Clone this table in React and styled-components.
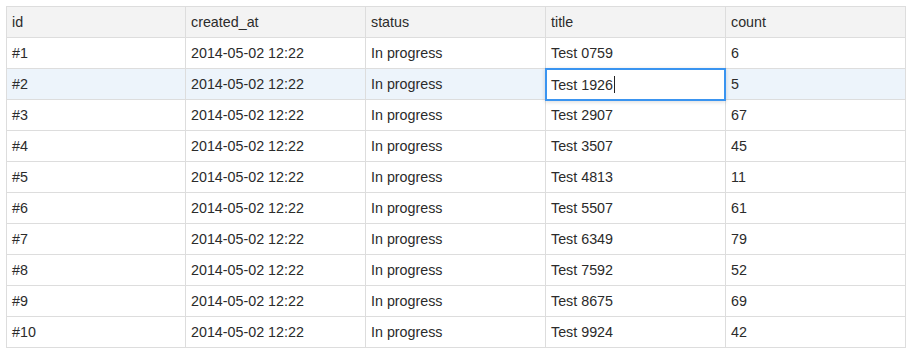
import React from 'react'
import styled, { createGlobalStyle } from 'styled-components'

const GlobalStyle = createGlobalStyle`
  body {
    margin: 0;
    background: #fff;
    font-family: "Liberation Sans", Arial, sans-serif;
  }
`

const rows = [
  { id: 1, title: 'Test 0759', count: 6 },
  { id: 2, title: 'Test 1926', count: 5 },
  { id: 3, title: 'Test 2907', count: 67 },
  { id: 4, title: 'Test 3507', count: 45 },
  { id: 5, title: 'Test 4813', count: 11 },
  { id: 6, title: 'Test 5507', count: 61 },
  { id: 7, title: 'Test 6349', count: 79 },
  { id: 8, title: 'Test 7592', count: 52 },
  { id: 9, title: 'Test 8675', count: 69 },
  { id: 10, title: 'Test 9924', count: 42 },
]

const columns = [
  { key: 'id', width: 179 },
  { key: 'created_at', width: 180 },
  { key: 'status', width: 180 },
  { key: 'title', width: 180 },
  { key: 'count', width: 180 },
]

const Wrap = styled.div`
  padding: 6px 0 0 6px;
`

const Grid = styled.table`
  border-collapse: collapse;
  table-layout: fixed;
  font-size: 14.3px;
  color: #2b2b2b;
`

const Col = styled.col`
  width: ${p => p.$width}px;
`

const HeadCell = styled.th`
  height: 30px;
  padding: 0 5px;
  text-align: left;
  font-weight: normal;
  background: #f3f3f3;
  border: 1px solid #dddddd;
`

const Row = styled.tr`
  background: ${p => (p.$active ? '#edf4fb' : '#fff')};
`

const Cell = styled.td`
  position: relative;
  height: 30px;
  padding: 0 5px;
  border: 1px solid #dddddd;
  white-space: nowrap;
`

const Editor = styled.div`
  position: absolute;
  left: -1px;
  top: -1px;
  right: -1px;
  bottom: -2px;
  display: flex;
  align-items: center;
  padding: 0 4px;
  background: #fff;
  border: 2px solid #3a94f0;
  box-shadow: 0 1px 4px rgba(0, 0, 0, 0.15);
  z-index: 2;
`

const Caret = styled.span`
  display: inline-block;
  width: 1px;
  height: 17px;
  margin-left: 1px;
  background: #222;
`

export default function App() {
  return (
    <Wrap>
      <GlobalStyle />
      <Grid>
        <colgroup>
          {columns.map(c => (
            <Col key={c.key} $width={c.width} />
          ))}
        </colgroup>
        <thead>
          <tr>
            {columns.map(c => (
              <HeadCell key={c.key}>{c.key}</HeadCell>
            ))}
          </tr>
        </thead>
        <tbody>
          {rows.map(r => (
            <Row key={r.id} $active={r.id === 2}>
              <Cell>#{r.id}</Cell>
              <Cell>2014-05-02 12:22</Cell>
              <Cell>In progress</Cell>
              <Cell>
                {r.title}
                {r.id === 2 && (
                  <Editor>
                    {r.title}
                    <Caret />
                  </Editor>
                )}
              </Cell>
              <Cell>{r.count}</Cell>
            </Row>
          ))}
        </tbody>
      </Grid>
    </Wrap>
  )
}
